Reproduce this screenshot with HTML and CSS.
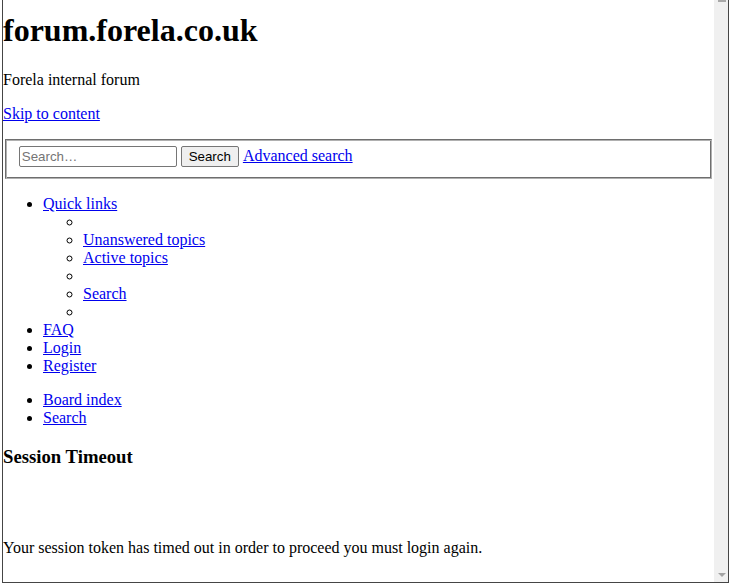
FILE: index.html
```html
<!DOCTYPE html>
<html lang="en">
<head>
<meta charset="utf-8">
<title>forum.forela.co.uk - Session Timeout</title>
<link rel="stylesheet" href="styles.css">
</head>
<body>
<div class="window">
  <div class="page">
    <h1 class="site-title">forum.forela.co.uk</h1>
    <p>Forela internal forum</p>
    <p><a href="#start_here">Skip to content</a></p>
    <form class="search-form">
      <fieldset class="search-box">
        <input class="search-input" type="search" placeholder="Search…"> <button class="search-button" type="button">Search</button> <a href="#">Advanced search</a>
      </fieldset>
    </form>
    <ul class="nav-list">
      <li><a href="#">Quick links</a>
        <ul class="sub-list">
          <li></li>
          <li><a href="#">Unanswered topics</a></li>
          <li><a href="#">Active topics</a></li>
          <li></li>
          <li><a href="#">Search</a></li>
          <li></li>
        </ul>
      </li>
      <li><a href="#">FAQ</a></li>
      <li><a href="#">Login</a></li>
      <li><a href="#">Register</a></li>
    </ul>
    <ul class="nav-list">
      <li><a href="#">Board index</a></li>
      <li><a href="#">Search</a></li>
    </ul>
    <h3 class="message-title">Session Timeout</h3>
    <p class="message-text">Your session token has timed out in order to proceed you must login again.</p>
  </div>
  <div class="scrollbar">
    <div class="scroll-thumb"></div>
    <div class="scroll-arrow"></div>
  </div>
</div>
</body>
</html>
```
FILE: styles.css
```css
html, body {
  margin: 0;
  padding: 0;
  background: #ffffff;
}

body {
  width: 731px;
  height: 585px;
  padding: 0 2px 2px 2px;
  box-sizing: border-box;
  font-family: "Liberation Serif", "Times New Roman", serif;
  font-size: 16px;
  color: #000000;
  overflow: hidden;
}

.window {
  display: flex;
  height: 100%;
  box-sizing: border-box;
  border: 1px solid #454545;
  border-top: none;
}

.page {
  flex: 1;
  min-width: 0;
  overflow: hidden;
}

a {
  color: #0000ee;
}

.site-title {
  font-size: 32px;
  margin: 12px 0 22.44px 0;
}

p {
  margin: 16px 0;
}

.search-form {
  margin: 0;
}

.search-box {
  margin: 0 2px;
  padding: 5.6px 12.75px 11px 12.75px;
  border: 1px solid;
  border-color: #6e6e6e #b0b0b0 #b0b0b0 #6e6e6e;
  box-shadow: inset 1px 1px 0 #b0b0b0, inset -1px -1px 0 #6e6e6e;
  min-width: 0;
}

.search-input,
.search-button {
  font-family: "Liberation Sans", Arial, sans-serif;
  font-size: 13.333px;
  height: 21px;
  box-sizing: border-box;
  border: 1px solid #767676;
  border-radius: 2px;
  margin: 0;
  vertical-align: baseline;
}

.search-input {
  width: 158px;
  padding: 1px 2px;
  color: #000000;
  background: #ffffff;
}

.search-input::placeholder {
  color: #757575;
}

.search-button {
  width: 58px;
  padding: 1px 6px;
  margin-right: 1px;
  background: #efefef;
  color: #000000;
}

.nav-list {
  margin: 16px 0;
  padding-left: 40px;
  list-style: disc;
}

.sub-list {
  margin: 0;
  padding-left: 40px;
  list-style: circle;
}

.nav-list li,
.sub-list li {
  line-height: 18px;
  min-height: 18px;
}

.message-title {
  font-size: 18.72px;
  margin: 18.72px 0;
}

.message-text {
  padding-top: 53px;
}

.scrollbar {
  width: 14px;
  flex: none;
  background: #f0f0f0;
  display: flex;
  flex-direction: column;
  justify-content: space-between;
}

.scroll-thumb {
  width: 8px;
  height: 2px;
  margin-left: 4px;
  background: #a8a8a8;
}

.scroll-arrow {
  width: 0;
  height: 0;
  margin: 0 0 5px 4px;
  border-left: 4px solid transparent;
  border-right: 4px solid transparent;
  border-top: 4px solid #a3a3a3;
}
```
